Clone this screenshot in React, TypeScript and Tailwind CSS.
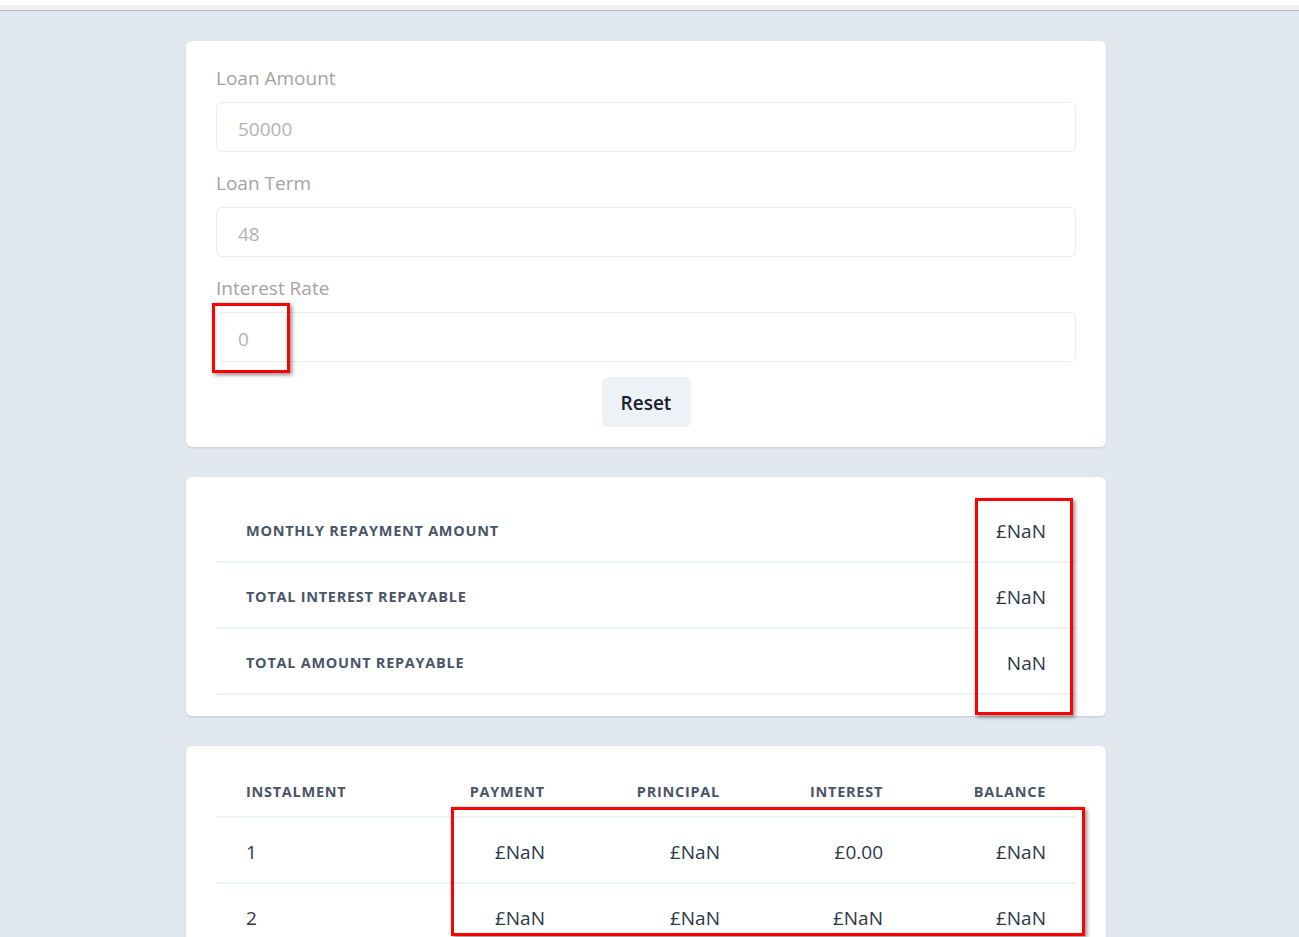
import React from "react";

const font = { fontFamily: '"Open Sans", "Noto Sans", sans-serif' };

const fields = [
    { label: "Loan Amount", value: "50000" },
    { label: "Loan Term", value: "48" },
    { label: "Interest Rate", value: "0" },
];

const summary = [
    { label: "Monthly Repayment Amount", value: "£NaN" },
    { label: "Total Interest Repayable", value: "£NaN" },
    { label: "Total Amount Repayable", value: "NaN" },
];

const rows = [
    ["1", "£NaN", "£NaN", "£0.00", "£NaN"],
    ["2", "£NaN", "£NaN", "£NaN", "£NaN"],
];

const headers = ["Instalment", "Payment", "Principal", "Interest", "Balance"];

const Marker = ({ className }: { className: string }) => (
    <div className={`absolute border-[3px] border-[#ff0000] shadow-[2px_2px_4px_rgba(0,0,0,0.45)] pointer-events-none ${className}`} />
);

export default function App() {
    return (
        <div className="min-h-[937px] bg-[#e2e8f0] relative overflow-hidden" style={font}>
            <div className="h-[5px] bg-white" />
            <div className="h-[6px] bg-[#f2f2f2] border-b border-[#b9b9b9]" />

            <div className="w-[920px] ml-[186px] pt-[30px] flex flex-col gap-[30px]">
                {/* inputs */}
                <div className="bg-white rounded-md shadow-sm px-[30px] pt-[23px] pb-[20px]">
                    {fields.map((f, i) => (
                        <div key={f.label} className={i > 0 ? "mt-[17px]" : ""}>
                            <label className="block text-[19px] leading-[28px] text-[#a3a3a3]">{f.label}</label>
                            <div className="mt-[10px] h-[50px] border border-[#ececec] rounded-md px-[21px] pt-[4px] flex items-center text-[19px] text-[#b3b3b3]">
                                {f.value}
                            </div>
                        </div>
                    ))}
                    <div className="flex justify-center mt-[15px]">
                        <button className="h-[50px] w-[89px] rounded-md bg-[#edf2f7] text-[19px] font-semibold text-[#1a202c] pt-[2px]">
                            Reset
                        </button>
                    </div>
                </div>

                {/* summary */}
                <div className="bg-white rounded-md shadow-sm px-[30px] pt-[20px] pb-[21px]">
                    {summary.map((s) => (
                        <div key={s.label} className="h-[66px] border-b-2 border-[#edf2f7] flex items-center justify-between px-[30px] pt-[4px]">
                            <span className="text-[14.5px] font-bold uppercase tracking-wider text-[#4a5568]">{s.label}</span>
                            <span className="text-[19px] text-[#2d3748]">{s.value}</span>
                        </div>
                    ))}
                </div>

                {/* schedule */}
                <div className="bg-white rounded-md shadow-sm px-[30px] pt-[20px] pb-[20px]">
                    <div className="grid grid-cols-[204px_155px_175px_163px_163px] h-[52px] items-center border-b-2 border-[#edf2f7] pt-[2px]">
                        {headers.map((h, i) => (
                            <span
                                key={h}
                                className={`px-[30px] text-[14.5px] font-bold uppercase tracking-wider text-[#4a5568] ${i === 0 ? "text-left" : "text-right"}`}
                            >
                                {h}
                            </span>
                        ))}
                    </div>
                    {rows.map((r) => (
                        <div key={r[0]} className="grid grid-cols-[204px_155px_175px_163px_163px] h-[66px] items-center border-b-2 border-[#edf2f7] pt-[4px]">
                            {r.map((c, i) => (
                                <span key={i} className={`px-[30px] text-[19px] text-[#2d3748] ${i === 0 ? "text-left" : "text-right"}`}>
                                    {c}
                                </span>
                            ))}
                        </div>
                    ))}
                </div>
            </div>

            <Marker className="left-[212px] top-[303px] w-[78px] h-[70px]" />
            <Marker className="left-[975px] top-[498px] w-[98px] h-[217px]" />
            <Marker className="left-[451px] top-[807px] w-[634px] h-[129px]" />
        </div>
    );
}
